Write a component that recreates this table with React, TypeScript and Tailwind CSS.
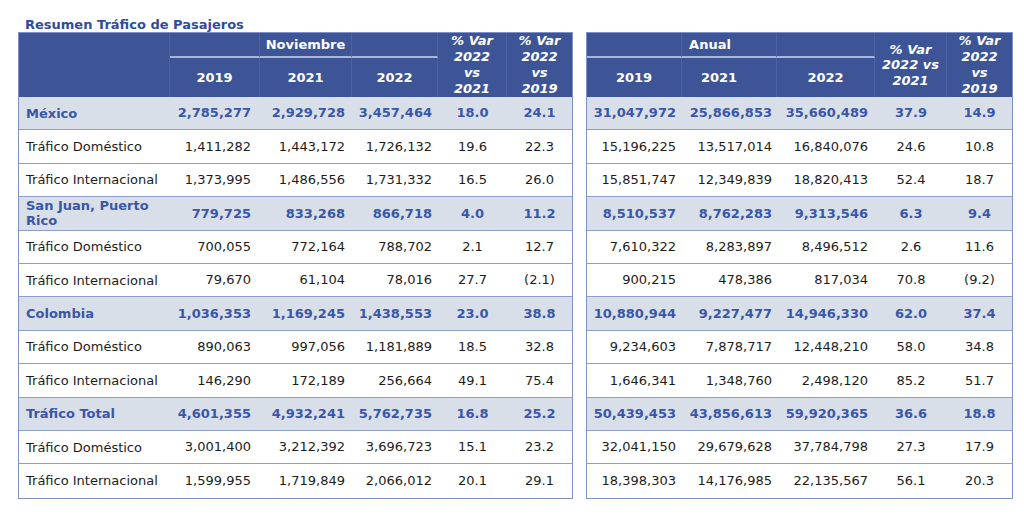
import React from "react";

type Row = { label: string; bold?: boolean; l: string[]; r: string[] };

const rows: Row[] = [
  { label: "México", bold: true, l: ["2,785,277", "2,929,728", "3,457,464", "18.0", "24.1"], r: ["31,047,972", "25,866,853", "35,660,489", "37.9", "14.9"] },
  { label: "Tráfico Doméstico", l: ["1,411,282", "1,443,172", "1,726,132", "19.6", "22.3"], r: ["15,196,225", "13,517,014", "16,840,076", "24.6", "10.8"] },
  { label: "Tráfico Internacional", l: ["1,373,995", "1,486,556", "1,731,332", "16.5", "26.0"], r: ["15,851,747", "12,349,839", "18,820,413", "52.4", "18.7"] },
  { label: "San Juan, Puerto Rico", bold: true, l: ["779,725", "833,268", "866,718", "4.0", "11.2"], r: ["8,510,537", "8,762,283", "9,313,546", "6.3", "9.4"] },
  { label: "Tráfico Doméstico", l: ["700,055", "772,164", "788,702", "2.1", "12.7"], r: ["7,610,322", "8,283,897", "8,496,512", "2.6", "11.6"] },
  { label: "Tráfico Internacional", l: ["79,670", "61,104", "78,016", "27.7", "(2.1)"], r: ["900,215", "478,386", "817,034", "70.8", "(9.2)"] },
  { label: "Colombia", bold: true, l: ["1,036,353", "1,169,245", "1,438,553", "23.0", "38.8"], r: ["10,880,944", "9,227,477", "14,946,330", "62.0", "37.4"] },
  { label: "Tráfico Doméstico", l: ["890,063", "997,056", "1,181,889", "18.5", "32.8"], r: ["9,234,603", "7,878,717", "12,448,210", "58.0", "34.8"] },
  { label: "Tráfico Internacional", l: ["146,290", "172,189", "256,664", "49.1", "75.4"], r: ["1,646,341", "1,348,760", "2,498,120", "85.2", "51.7"] },
  { label: "Tráfico Total", bold: true, l: ["4,601,355", "4,932,241", "5,762,735", "16.8", "25.2"], r: ["50,439,453", "43,856,613", "59,920,365", "36.6", "18.8"] },
  { label: "Tráfico Doméstico", l: ["3,001,400", "3,212,392", "3,696,723", "15.1", "23.2"], r: ["32,041,150", "29,679,628", "37,784,798", "27.3", "17.9"] },
  { label: "Tráfico Internacional", l: ["1,599,955", "1,719,849", "2,066,012", "20.1", "29.1"], r: ["18,398,303", "14,176,985", "22,135,567", "56.1", "20.3"] },
];

const LEFT = "grid grid-cols-[151px_90px_92px_86px_69px_65px]";
const RIGHT = "grid grid-cols-[95px_95px_98px_72px_65px]";

function rowCls(r: Row, last: boolean) {
  return [
    "h-[33.4px] items-center",
    r.bold ? "bg-[#d9dfe9] text-[#3a57a7] font-bold" : "bg-white text-[#1c1c1c]",
    last ? "" : "border-b border-[#8d9dd3]",
  ].join(" ");
}

const hcell = "border-r border-[#4a62a2] flex items-center justify-center";

export default function App() {
  return (
    <div className="w-[1024px] h-[524px] bg-white font-['DejaVu_Sans',sans-serif] text-[13px] pt-[17px] pl-[18px]">
      <div className="h-[15px] leading-[15px] pl-[7px] font-bold text-[#2f4c9c]">Resumen Tráfico de Pasajeros</div>
      <div className="flex gap-[13px]">
        {/* Left table */}
        <div className="w-[555px] border border-[#7f91cc]">
          <div className={`${LEFT} grid-rows-[25px_39px] bg-[#3d5597] text-white font-bold`}>
            <div className="row-span-2 border-r border-[#4a62a2]"></div>
            <div className="border-b-2 border-[#aab6d9] border-r border-r-[#4a62a2]"></div>
            <div className="border-b-2 border-[#aab6d9] border-r border-r-[#4a62a2] flex items-center justify-center pt-[1px]">Noviembre</div>
            <div className="border-b-2 border-[#aab6d9] border-r border-r-[#4a62a2]"></div>
            <div className={`row-span-2 ${hcell} italic text-center leading-[16px]`}>% Var<br />2022<br />vs<br />2021</div>
            <div className="row-span-2 flex items-center justify-center italic text-center leading-[16px]">% Var<br />2022<br />vs<br />2019</div>
            <div className={hcell}>2019</div>
            <div className={hcell}>2021</div>
            <div className={hcell}>2022</div>
          </div>
          {rows.map((r, i) => (
            <div key={i} className={`${LEFT} ${rowCls(r, i === rows.length - 1)}`}>
              <div className="pl-[7px] leading-[15px]">{r.label}</div>
              <div className="text-right pr-[9px]">{r.l[0]}</div>
              <div className="text-right pr-[7px]">{r.l[1]}</div>
              <div className="text-right pr-[6px]">{r.l[2]}</div>
              <div className="text-center">{r.l[3]}</div>
              <div className="text-center">{r.l[4]}</div>
            </div>
          ))}
        </div>
        {/* Right table */}
        <div className="w-[427px] border border-[#7f91cc]">
          <div className={`${RIGHT} grid-rows-[25px_39px] bg-[#3d5597] text-white font-bold`}>
            <div className="border-b-2 border-[#aab6d9] border-r border-r-[#4a62a2]"></div>
            <div className="border-b-2 border-[#aab6d9] border-r border-r-[#4a62a2] flex items-center justify-center pt-[1px] pr-[38px]">Anual</div>
            <div className="border-b-2 border-[#aab6d9] border-r border-r-[#4a62a2]"></div>
            <div className={`row-span-2 ${hcell} italic text-center leading-[15.5px]`}>% Var<br />2022 vs<br />2021</div>
            <div className="row-span-2 flex items-center justify-center italic text-center leading-[16px]">% Var<br />2022<br />vs<br />2019</div>
            <div className={hcell}>2019</div>
            <div className={`${hcell} pr-[20px]`}>2021</div>
            <div className={hcell}>2022</div>
          </div>
          {rows.map((r, i) => (
            <div key={i} className={`${RIGHT} ${rowCls(r, i === rows.length - 1)}`}>
              <div className="text-right pr-[6px]">{r.r[0]}</div>
              <div className="text-right pr-[5px]">{r.r[1]}</div>
              <div className="text-right pr-[7px]">{r.r[2]}</div>
              <div className="text-center">{r.r[3]}</div>
              <div className="text-center">{r.r[4]}</div>
            </div>
          ))}
        </div>
      </div>
    </div>
  );
}
